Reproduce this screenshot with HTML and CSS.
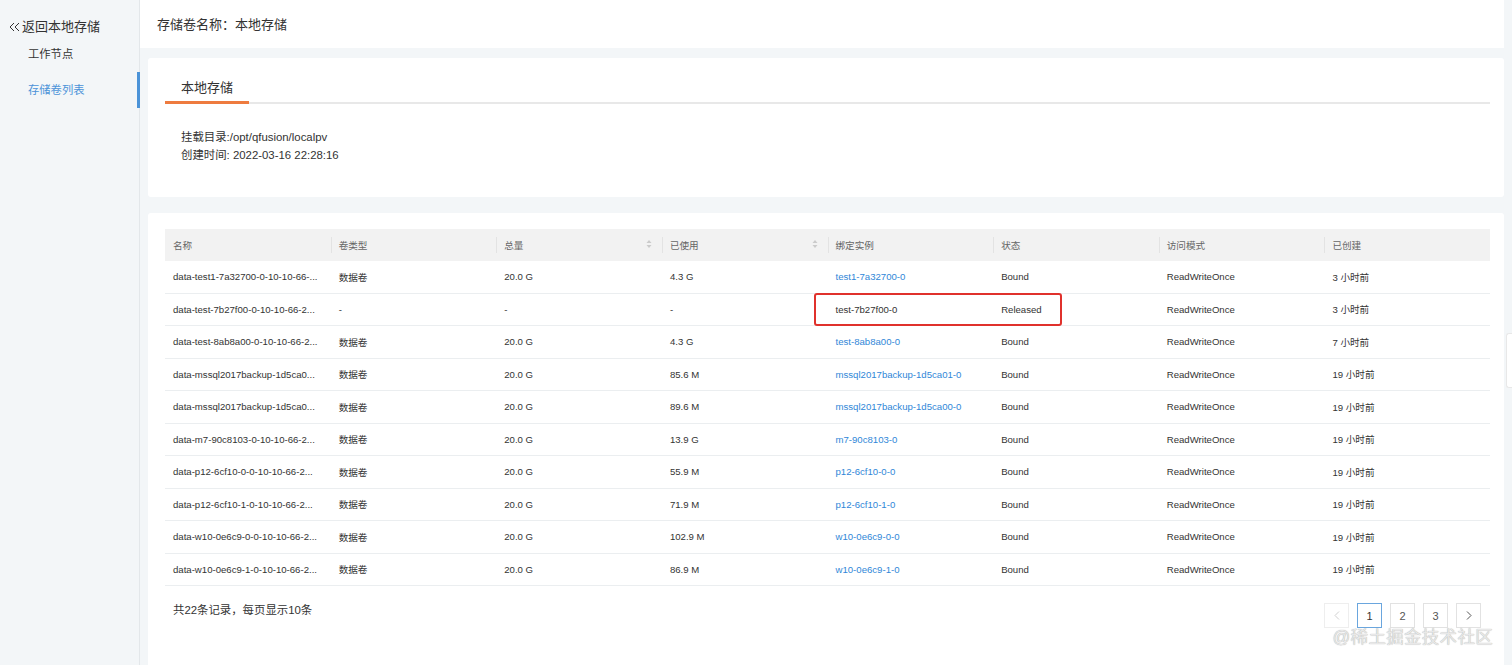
FILE: index.html
```html
<!DOCTYPE html>
<html lang="zh-CN">

<head>
    <meta charset="UTF-8">
    <meta name="viewport" content="width=device-width, initial-scale=1.0">
    <title>存储卷列表</title>
    <link rel="stylesheet" href="styles.css">
</head>

<body>
    <div class="page">
        <aside class="side">
            <div class="back">
                <svg class="back-icon" width="11" height="10" viewBox="0 0 11 10">
                    <path d="M5 1 L1 5 L5 9 M10 1 L6 5 L10 9" fill="none" stroke="#333" stroke-width="1" />
                </svg>返回本地存储
            </div>
            <div class="nav-item">工作节点</div>
            <div class="nav-item active">存储卷列表</div>
        </aside>

        <main class="main">
            <div class="title">存储卷名称：本地存储</div>
            <div class="content">
                <section class="card info">
                    <div class="tabs"><span class="tab active">本地存储</span></div>
                    <div class="meta">
                        <p>挂载目录:/opt/qfusion/localpv</p>
                        <p>创建时间: 2022-03-16 22:28:16</p>
                    </div>
                </section>

                <section class="card list">
                    <table class="grid">
                        <thead>
                            <tr>
                                <th>名称</th>
                                <th>卷类型</th>
                                <th class="sortable">总量<svg class="sort" width="6" height="10" viewBox="0 0 6 10"><path d="M3 1 L5.5 4 L0.5 4 Z M3 9 L5.5 6 L0.5 6 Z" fill="#cbcbcb" /></svg></th>
                                <th class="sortable">已使用<svg class="sort" width="6" height="10" viewBox="0 0 6 10"><path d="M3 1 L5.5 4 L0.5 4 Z M3 9 L5.5 6 L0.5 6 Z" fill="#cbcbcb" /></svg></th>
                                <th>绑定实例</th>
                                <th>状态</th>
                                <th>访问模式</th>
                                <th>已创建</th>
                            </tr>
                        </thead>
                        <tbody>
                            <tr>
                                <td class="name">data-test1-7a32700-0-10-10-66-...</td>
                                <td>数据卷</td>
                                <td>20.0 G</td>
                                <td>4.3 G</td>
                                <td><a class="link">test1-7a32700-0</a></td>
                                <td>Bound</td>
                                <td>ReadWriteOnce</td>
                                <td>3 小时前</td>
                            </tr>
                            <tr>
                                <td class="name">data-test-7b27f00-0-10-10-66-2...</td>
                                <td>-</td>
                                <td>-</td>
                                <td>-</td>
                                <td class="marked">test-7b27f00-0<span class="mark"></span></td>
                                <td>Released</td>
                                <td>ReadWriteOnce</td>
                                <td>3 小时前</td>
                            </tr>
                            <tr>
                                <td class="name">data-test-8ab8a00-0-10-10-66-2...</td>
                                <td>数据卷</td>
                                <td>20.0 G</td>
                                <td>4.3 G</td>
                                <td><a class="link">test-8ab8a00-0</a></td>
                                <td>Bound</td>
                                <td>ReadWriteOnce</td>
                                <td>7 小时前</td>
                            </tr>
                            <tr>
                                <td class="name">data-mssql2017backup-1d5ca0...</td>
                                <td>数据卷</td>
                                <td>20.0 G</td>
                                <td>85.6 M</td>
                                <td><a class="link">mssql2017backup-1d5ca01-0</a></td>
                                <td>Bound</td>
                                <td>ReadWriteOnce</td>
                                <td>19 小时前</td>
                            </tr>
                            <tr>
                                <td class="name">data-mssql2017backup-1d5ca0...</td>
                                <td>数据卷</td>
                                <td>20.0 G</td>
                                <td>89.6 M</td>
                                <td><a class="link">mssql2017backup-1d5ca00-0</a></td>
                                <td>Bound</td>
                                <td>ReadWriteOnce</td>
                                <td>19 小时前</td>
                            </tr>
                            <tr>
                                <td class="name">data-m7-90c8103-0-10-10-66-2...</td>
                                <td>数据卷</td>
                                <td>20.0 G</td>
                                <td>13.9 G</td>
                                <td><a class="link">m7-90c8103-0</a></td>
                                <td>Bound</td>
                                <td>ReadWriteOnce</td>
                                <td>19 小时前</td>
                            </tr>
                            <tr>
                                <td class="name">data-p12-6cf10-0-0-10-10-66-2...</td>
                                <td>数据卷</td>
                                <td>20.0 G</td>
                                <td>55.9 M</td>
                                <td><a class="link">p12-6cf10-0-0</a></td>
                                <td>Bound</td>
                                <td>ReadWriteOnce</td>
                                <td>19 小时前</td>
                            </tr>
                            <tr>
                                <td class="name">data-p12-6cf10-1-0-10-10-66-2...</td>
                                <td>数据卷</td>
                                <td>20.0 G</td>
                                <td>71.9 M</td>
                                <td><a class="link">p12-6cf10-1-0</a></td>
                                <td>Bound</td>
                                <td>ReadWriteOnce</td>
                                <td>19 小时前</td>
                            </tr>
                            <tr>
                                <td class="name">data-w10-0e6c9-0-0-10-10-66-2...</td>
                                <td>数据卷</td>
                                <td>20.0 G</td>
                                <td>102.9 M</td>
                                <td><a class="link">w10-0e6c9-0-0</a></td>
                                <td>Bound</td>
                                <td>ReadWriteOnce</td>
                                <td>19 小时前</td>
                            </tr>
                            <tr>
                                <td class="name">data-w10-0e6c9-1-0-10-10-66-2...</td>
                                <td>数据卷</td>
                                <td>20.0 G</td>
                                <td>86.9 M</td>
                                <td><a class="link">w10-0e6c9-1-0</a></td>
                                <td>Bound</td>
                                <td>ReadWriteOnce</td>
                                <td>19 小时前</td>
                            </tr>
                        </tbody>
                    </table>

                    <div class="foot">
                        <span class="total">共22条记录，每页显示10条</span>
                        <div class="pager">
                            <span class="page-btn disabled">
                                <svg width="6" height="9" viewBox="0 0 6 9"><path d="M5 0.5 L1 4.5 L5 8.5" fill="none" stroke="#d0d0d0" stroke-width="1" /></svg>
                            </span>
                            <span class="page-btn current">1</span>
                            <span class="page-btn">2</span>
                            <span class="page-btn">3</span>
                            <span class="page-btn">
                                <svg width="6" height="9" viewBox="0 0 6 9"><path d="M1 0.5 L5 4.5 L1 8.5" fill="none" stroke="#555" stroke-width="1" /></svg>
                            </span>
                        </div>
                    </div>
                </section>
            </div>
        </main>

        <div class="scrollbar"><div class="thumb"></div></div>

        <div class="watermark">@稀土掘金技术社区</div>
    </div>
</body>

</html>
```

FILE: styles.css
```css
html,
body {
    width: 100%;
    height: 100%;
    margin: 0;
    padding: 0;
    background-color: #f3f6f8;
    color: #333;
    font-family: "Liberation Sans", Arial, "Noto Sans CJK SC", sans-serif;
    overflow: hidden;
}

div,
p {
    margin: 0;
    padding: 0;
    box-sizing: border-box;
}

.page {
    position: relative;
    display: flex;
    width: 1512px;
    height: 665px;
}

/* sidebar */

.side {
    width: 140px;
    flex: none;
    background-color: #f3f6f8;
    border-right: 1px solid #e3e7ea;
    box-sizing: border-box;
}

.back {
    margin-top: 18px;
    height: 18px;
    line-height: 18px;
    padding-left: 9px;
    font-size: 13px;
    color: #333;
}

.back-icon {
    margin-right: 2px;
    vertical-align: -1px;
}

.nav-item {
    height: 36px;
    line-height: 36px;
    padding-left: 28px;
    font-size: 11.3px;
    color: #333;
}

.nav-item.active {
    color: #4b93d8;
    box-shadow: inset -3px 0 0 #4b93d8;
    margin-right: -1px;
}

/* main */

.main {
    flex: 1;
    display: flex;
    flex-direction: column;
    min-width: 0;
}

.title {
    height: 48px;
    line-height: 50px;
    padding-left: 17px;
    background-color: #fff;
    font-size: 13px;
    color: #333;
}

.content {
    flex: 1;
    padding: 10px 0 0 8px;
}

.card {
    background-color: #fff;
    border-radius: 3px;
}

.card.info {
    height: 139px;
    padding: 0 14px 0 17px;
}

.tabs {
    border-bottom: 2px solid #e8e8e8;
}

.tab {
    display: inline-block;
    width: 84px;
    box-sizing: border-box;
    padding: 21px 16px 4px;
    line-height: 18px;
    font-size: 13px;
    color: #333;
}

.tab.active {
    border-bottom: 3px solid #ee7b3f;
    margin-bottom: -2px;
}

.meta {
    margin-top: 24px;
    padding-left: 16px;
    font-size: 11.4px;
    line-height: 18px;
    color: #333;
}

.card.list {
    margin-top: 16px;
    height: 447px;
    padding: 16px 14px 0 17px;
}

/* table */

.grid {
    width: 100%;
    table-layout: fixed;
    border-collapse: collapse;
    font-size: 9.6px;
}

.grid th {
    position: relative;
    height: 32px;
    padding: 0 8px;
    background-color: #f2f2f2;
    color: #666;
    font-weight: normal;
    text-align: left;
}

.grid th+th::before {
    content: "";
    position: absolute;
    left: 0;
    top: 8px;
    bottom: 8px;
    width: 1px;
    background-color: #e3e3e3;
}

.grid th .sort {
    float: right;
    margin-top: 1px;
    margin-right: 2px;
}

.grid td {
    height: 31.5px;
    padding: 0 8px;
    border-bottom: 1px solid #ebeef0;
    color: #333;
    white-space: nowrap;
    overflow: hidden;
    text-overflow: ellipsis;
}

.grid .link {
    color: #3087d8;
    text-decoration: none;
}

.grid td.marked {
    position: relative;
    overflow: visible;
}

.mark {
    position: absolute;
    left: -14px;
    top: -1px;
    width: 248px;
    height: 33px;
    box-sizing: border-box;
    border: 2px solid #e0312c;
    border-radius: 3px;
}

/* footer */

.foot {
    display: flex;
    justify-content: space-between;
    align-items: flex-start;
    padding: 17px 9px 0 8px;
}

.total {
    font-size: 11.4px;
    line-height: 14px;
    color: #333;
}

.pager {
    display: flex;
    gap: 8px;
}

.page-btn {
    display: flex;
    align-items: center;
    justify-content: center;
    width: 25px;
    height: 25px;
    box-sizing: border-box;
    border: 1px solid #e2e2e2;
    background-color: #fff;
    font-size: 11px;
    color: #555;
}

.page-btn.disabled {
    border-color: #eeeeee;
}

.page-btn.current {
    border-color: #6aa6de;
    color: #333;
}

/* right scroll strip */

.scrollbar {
    width: 8px;
    flex: none;
    padding-top: 65px;
    background-color: #f3f6f8;
}

.thumb {
    height: 55px;
    margin-top: 268px;
    margin-left: 2px;
    width: 6px;
    background-color: #fff;
    border: 1px solid #e8e8e8;
    border-right: none;
    border-radius: 3px 0 0 3px;
}

.watermark {
    position: absolute;
    right: 19px;
    bottom: 17px;
    font-size: 17.5px;
    line-height: 22px;
    color: #e8e8e8;
    text-shadow: 0 0 1px #9a9a9a;
    letter-spacing: 0.3px;
}
```
